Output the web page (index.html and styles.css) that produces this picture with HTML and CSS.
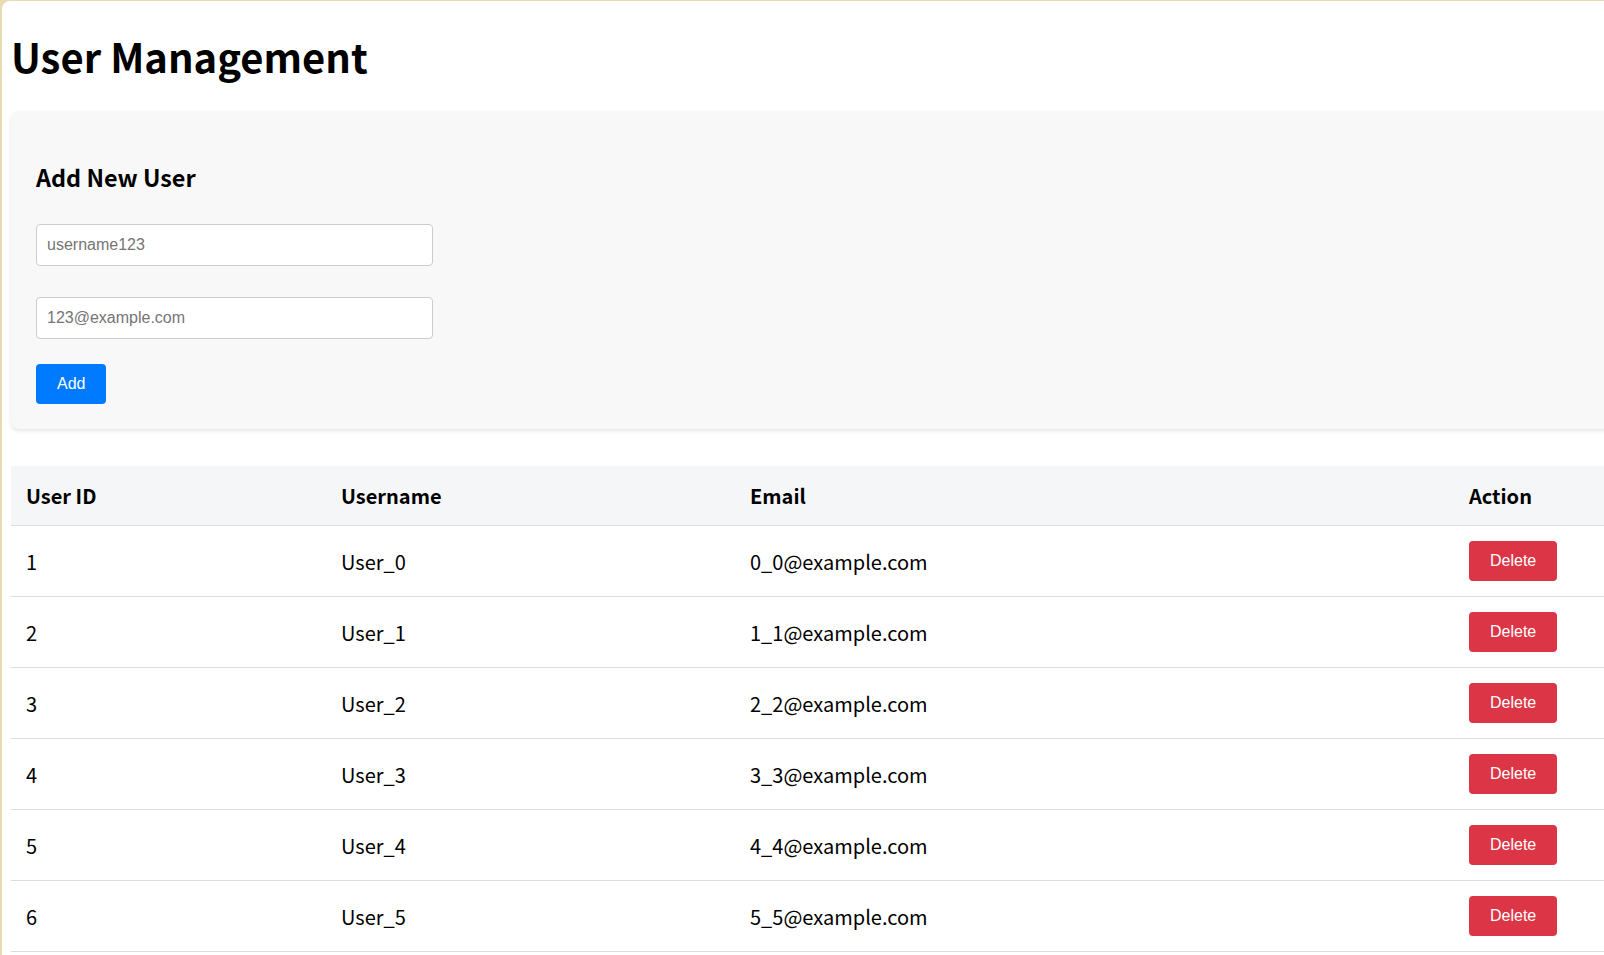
FILE: index.html
```html
<!DOCTYPE html>
<html lang="en">
<head>
<meta charset="utf-8">
<title>User Management</title>
<link rel="stylesheet" href="styles.css">
</head>
<body>
<div class="frame">
  <div class="page">
    <h1 class="title">User Management</h1>
    <section class="card">
      <h3 class="card-title">Add New User</h3>
      <input class="field field-first" type="text" placeholder="username123">
      <input class="field field-second" type="email" placeholder="123@example.com">
      <button class="btn btn-add">Add</button>
    </section>
    <table class="users">
      <thead>
        <tr>
          <th class="col-id">User ID</th>
          <th class="col-name">Username</th>
          <th class="col-email">Email</th>
          <th class="col-action">Action</th>
        </tr>
      </thead>
      <tbody>
        <tr><td>1</td><td>User_0</td><td>0_0@example.com</td><td><button class="btn btn-delete">Delete</button></td></tr>
        <tr><td>2</td><td>User_1</td><td>1_1@example.com</td><td><button class="btn btn-delete">Delete</button></td></tr>
        <tr><td>3</td><td>User_2</td><td>2_2@example.com</td><td><button class="btn btn-delete">Delete</button></td></tr>
        <tr><td>4</td><td>User_3</td><td>3_3@example.com</td><td><button class="btn btn-delete">Delete</button></td></tr>
        <tr><td>5</td><td>User_4</td><td>4_4@example.com</td><td><button class="btn btn-delete">Delete</button></td></tr>
        <tr><td>6</td><td>User_5</td><td>5_5@example.com</td><td><button class="btn btn-delete">Delete</button></td></tr>
      </tbody>
    </table>
  </div>
</div>
</body>
</html>
```

FILE: styles.css
```css
html {
  background: #e8dab3;
  overflow: hidden;
}
body {
  margin: 0;
  font-family: "Noto Sans CJK SC", "Noto Sans", sans-serif;
  font-size: 20px;
  color: #000;
}
.frame {
  margin: 1px 0 0 2px;
  background: #fff;
  border-top-left-radius: 8px;
  min-height: 100vh;
  padding: 0 9px;
  overflow: hidden;
}
.page {
  width: 1640px;
}
.title {
  font-size: 40px;
  font-weight: 700;
  margin: 26px 0 26px;
  line-height: 58px;
}
.card {
  background: #f8f8f8;
  border-radius: 8px;
  padding: 25px;
  box-shadow: 0 2px 4px rgba(0, 0, 0, 0.1);
  display: flex;
  flex-direction: column;
  align-items: flex-start;
}
.card-title {
  font-size: 23.4px;
  font-weight: 700;
  margin: 24px 0 0;
  line-height: 34px;
}
.field {
  box-sizing: border-box;
  width: 397px;
  height: 42px;
  padding: 0 10px;
  border: 1px solid #ccc;
  border-radius: 4px;
  background: #fff;
  font-family: "Liberation Sans", Arial, sans-serif;
  font-size: 16px;
  color: #000;
}
.field::placeholder {
  color: #757575;
}
.field-first {
  margin-top: 30px;
}
.field-second {
  margin-top: 31px;
}
.btn {
  font-family: "Liberation Sans", Arial, sans-serif;
  font-size: 16px;
  color: #fff;
  border: 1px solid transparent;
  border-radius: 4px;
  padding: 10px 20px;
  line-height: 18px;
  cursor: pointer;
}
.btn-add {
  margin-top: 25px;
  background: #007bff;
}
.btn-delete {
  background: #dc3545;
  display: block;
}
.users {
  margin-top: 37px;
  border-collapse: collapse;
  width: 1610px;
  table-layout: fixed;
}
.users th,
.users td {
  text-align: left;
  padding: 15px;
  border-bottom: 1px solid #ddd;
  vertical-align: middle;
}
.users th {
  background: #f5f6f8;
  font-weight: 700;
  line-height: 29px;
}
.users td {
  line-height: 29px;
}
.col-id { width: 285px; }
.col-name { width: 379px; }
.col-email { width: 689px; }
.col-action { width: auto; }
```
